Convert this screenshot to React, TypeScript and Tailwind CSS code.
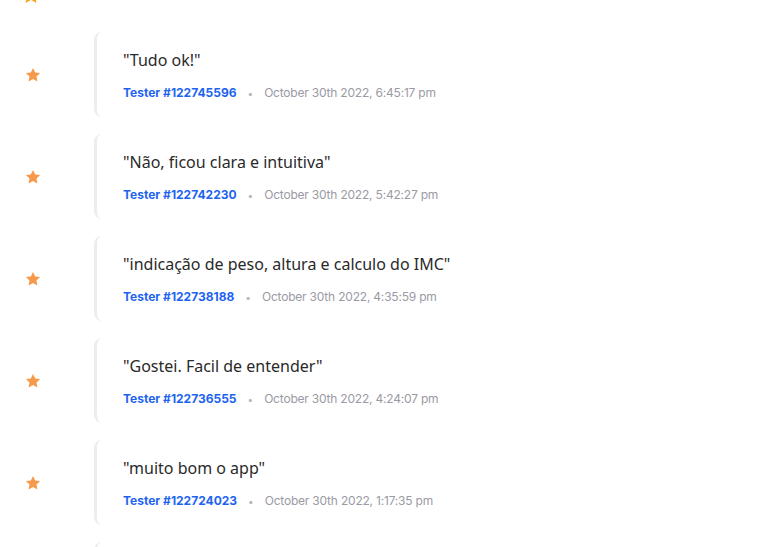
type Review = {
  text: string;
  tester: string;
  date: string;
};

const reviews: Review[] = [
  { text: '"Tudo ok!"', tester: "Tester #122745596", date: "October 30th 2022, 6:45:17 pm" },
  { text: '"Não, ficou clara e intuitiva"', tester: "Tester #122742230", date: "October 30th 2022, 5:42:27 pm" },
  { text: '"indicação de peso, altura e calculo do IMC"', tester: "Tester #122738188", date: "October 30th 2022, 4:35:59 pm" },
  { text: '"Gostei. Facil de entender"', tester: "Tester #122736555", date: "October 30th 2022, 4:24:07 pm" },
  { text: '"muito bom o app"', tester: "Tester #122724023", date: "October 30th 2022, 1:17:35 pm" },
];

function Star({ className }: { className?: string }) {
  return (
    <svg viewBox="0 0 24 24" className={className} fill="currentColor">
      <path d="M12 2.5l2.9 6.1 6.6.8-4.9 4.6 1.3 6.6L12 17.3l-5.9 3.3 1.3-6.6-4.9-4.6 6.6-.8z" />
    </svg>
  );
}

export default function App() {
  return (
    <div className="h-[547px] w-[782px] overflow-hidden bg-white font-['Inter',sans-serif]">
      {/* tail of the section above */}
      <div className="-mt-[14px] flex h-[20px] items-end">
        <div className="flex w-[61px] justify-center">
          <Star className="h-[22px] w-[22px] text-[#f9a21f]" />
        </div>
        <div className="ml-[44px] mb-[17px] h-[3px] w-[1px] bg-gray-300" />
      </div>

      <div className="mt-[26px] flex flex-col gap-[17px]">
        {reviews.map((r, i) => (
          <div key={i} className="flex items-center">
            <div className="flex w-[65px] justify-center">
              <Star className="h-[18px] w-[18px] text-[#f7994a]" />
            </div>
            <div className="ml-[29px] flex h-[85px] flex-1 flex-col justify-center rounded-l-[8px] border-l-[3px] border-[#ececf1] pl-[26px]">
              <p className="font-['Noto_Sans',sans-serif] text-[16px] leading-[22px] text-[#2a2a2a]">
                {r.text}
              </p>
              <div className="mt-[14px] flex items-center text-[12px] leading-[16px]">
                <span className="font-bold text-[#1e63f0]">{r.tester}</span>
                <span className="mx-[11px] text-[10px] text-[#b5b5bd]">•</span>
                <span className="tracking-[-0.2px] text-[#9a9aa4]">{r.date}</span>
              </div>
            </div>
          </div>
        ))}
        {/* next card, cut by the bottom edge */}
        <div className="flex">
          <div className="w-[65px]" />
          <div className="ml-[29px] h-[85px] flex-1 rounded-l-[8px] border-l-[3px] border-[#ececf1]" />
        </div>
      </div>
    </div>
  );
}
